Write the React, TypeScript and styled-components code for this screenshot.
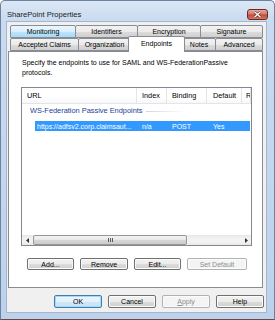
import styled, { createGlobalStyle } from "styled-components";

const GlobalStyle = createGlobalStyle`
  html, body {
    margin: 0;
    padding: 0;
    background: #ffffff;
  }
  body {
    font-family: "Liberation Sans", Arial, sans-serif;
    font-size: 7px;
    color: #000;
  }
`;

const Window = styled.div`
  box-sizing: border-box;
  width: 275px;
  height: 320px;
  display: flex;
  flex-direction: column;
  border: 1px solid #6d829e;
  border-bottom-color: #6b4a45;
  border-radius: 5px 5px 0 0;
  background: linear-gradient(to bottom, #dbe7f5 0px, #c9dbf0 20px, #bcd2ec 100%);
  overflow: hidden;
`;

const TitleBar = styled.div`
  height: 20px;
  flex-shrink: 0;
  display: flex;
  align-items: center;
  justify-content: space-between;
  box-sizing: border-box;
  padding: 6px 6px 0 6px;
`;

const Title = styled.span`
  font-size: 7.6px;
  color: #1a1a1a;
`;

const CloseButton = styled.div`
  width: 21px;
  height: 11px;
  box-sizing: border-box;
  border: 1px solid #6a2b24;
  border-radius: 3px;
  background: linear-gradient(to bottom, #e9a99b 0%, #d47968 45%, #c04a39 55%, #d5765d 100%);
  display: flex;
  align-items: center;
  justify-content: center;
`;

const Client = styled.div`
  flex: 1;
  display: flex;
  flex-direction: column;
  margin: 0 7px 6px 5px;
  border: 1px solid #a3b6cd;
  background: #f0f0f0;
  padding: 3px 0 4px 0;
  min-height: 0;
`;

const TabStrip = styled.div`
  display: flex;
  flex-direction: column;
  padding-left: 3px;
`;

const TabRow = styled.div`
  display: flex;
  height: 13px;
`;

const Tab = styled.div<{ $w: number; $hot?: boolean; $active?: boolean }>`
  box-sizing: border-box;
  width: ${({ $w }) => $w}px;
  height: ${({ $active }) => ($active ? 16 : 13)}px;
  margin-left: ${({ $active }) => ($active ? -3 : -1)}px;
  margin-right: ${({ $active }) => ($active ? -2 : 0)}px;
  margin-top: ${({ $active }) => ($active ? -2 : 0)}px;
  position: relative;
  z-index: ${({ $active }) => ($active ? 2 : 1)};
  border: 1px solid #898c95;
  border-bottom: ${({ $active }) => ($active ? "none" : "1px solid #898c95")};
  border-radius: 2px 2px 0 0;
  background: ${({ $hot, $active }) =>
    $active
      ? "#ffffff"
      : $hot
        ? "linear-gradient(to bottom, #eaf6fd 0%, #d9f0fc 50%, #bee6fd 51%, #a7d9f5 100%)"
        : "linear-gradient(to bottom, #f2f2f2 0%, #ebebeb 50%, #dddddd 51%, #cfcfcf 100%)"};
  display: flex;
  align-items: center;
  justify-content: center;
  padding-bottom: ${({ $active }) => ($active ? 2 : 0)}px;
  white-space: nowrap;
  &:first-child {
    margin-left: ${({ $active }) => ($active ? -2 : 0)}px;
  }
`;

const Panel = styled.div`
  flex: 1;
  display: flex;
  flex-direction: column;
  margin: 0 3px 0 1px;
  border: 1px solid #898c95;
  background: #ffffff;
  padding: 6px 10px 0 12px;
  min-height: 0;
`;

const Intro = styled.p`
  margin: 0 0 0 1px;
  line-height: 10px;
  width: 215px;
`;

const ListView = styled.div`
  margin-top: 9px;
  height: 159px;
  box-sizing: border-box;
  border: 1px solid #828790;
  display: flex;
  flex-direction: column;
  overflow: hidden;
`;

const HeaderRow = styled.div`
  display: flex;
  height: 16px;
  flex-shrink: 0;
  box-sizing: border-box;
  border-bottom: 1px solid #e5e5e5;
  background: linear-gradient(to bottom, #ffffff 0%, #ffffff 60%, #f7f8fa 100%);
`;

const HeaderCell = styled.div<{ $w?: number; $pad?: number }>`
  box-sizing: border-box;
  width: ${({ $w }) => ($w ? `${$w}px` : "auto")};
  flex: ${({ $w }) => ($w ? "none" : "1")};
  padding-left: ${({ $pad }) => $pad ?? 5}px;
  border-right: 1px solid #e5e5e5;
  display: flex;
  align-items: center;
  font-size: 7.3px;
  overflow: hidden;
  white-space: nowrap;
`;

const GroupHeader = styled.div`
  display: flex;
  align-items: center;
  height: 11px;
  margin-top: 1px;
  padding-left: 8px;
  color: #1e3c96;
  font-size: 7.4px;
  white-space: nowrap;
`;

const GroupLine = styled.div`
  width: 40px;
  height: 1px;
  margin-left: 3px;
  margin-top: 1px;
  background: linear-gradient(to right, #cfd7e6 0%, #e6ebf3 50%, rgba(255, 255, 255, 0) 100%);
`;

const ItemRow = styled.div<{ $selected?: boolean }>`
  display: flex;
  height: 10px;
  margin: 5px 1px 0 13px;
  background: ${({ $selected }) => ($selected ? "#3399ff" : "transparent")};
  color: ${({ $selected }) => ($selected ? "#ffffff" : "#000000")};
`;

const ItemCell = styled.div<{ $w?: number; $pad?: number }>`
  box-sizing: border-box;
  width: ${({ $w }) => ($w ? `${$w}px` : "auto")};
  flex: ${({ $w }) => ($w ? "none" : "1")};
  padding-left: ${({ $pad }) => $pad ?? 5}px;
  display: flex;
  align-items: center;
  overflow: hidden;
  white-space: nowrap;
`;

const Spacer = styled.div`
  flex: 1;
`;

const HScroll = styled.div`
  height: 10px;
  flex-shrink: 0;
  display: flex;
  align-items: stretch;
  background: linear-gradient(to bottom, #e6e6e6 0%, #f2f2f2 30%, #f2f2f2 70%, #e8e8e8 100%);
`;

const ScrollArrow = styled.div`
  width: 10px;
  display: flex;
  align-items: center;
  justify-content: center;
`;

const Thumb = styled.div<{ $w: number }>`
  width: ${({ $w }) => $w}px;
  box-sizing: border-box;
  margin-left: 1px;
  border: 1px solid #979797;
  border-radius: 2px;
  background: linear-gradient(to bottom, #f3f3f3 0%, #e8e8e8 50%, #d6d6d6 51%, #cdcdcd 100%);
  display: flex;
  align-items: center;
  justify-content: center;
  gap: 1px;
`;

const Grip = styled.div`
  width: 1px;
  height: 4px;
  background: #5a5a5a;
`;

const ButtonRow = styled.div<{ $gap: number }>`
  display: flex;
  gap: ${({ $gap }) => $gap}px;
`;

const PanelButtons = styled(ButtonRow)`
  margin: 12px 0 0 6px;
`;

const Footer = styled(ButtonRow)`
  justify-content: flex-end;
  margin-top: 7px;
  padding-right: 2px;
`;

const Button = styled.div<{ $w: number; $h?: number; $disabled?: boolean; $default?: boolean }>`
  box-sizing: border-box;
  width: ${({ $w }) => $w}px;
  height: ${({ $h }) => $h ?? 12}px;
  border: 1px solid
    ${({ $disabled, $default }) => ($disabled ? "#adb2b5" : $default ? "#3c7fb1" : "#707070")};
  border-radius: 2px;
  background: ${({ $disabled, $default }) =>
    $disabled
      ? "#f4f4f4"
      : $default
        ? "linear-gradient(to bottom, #eaf6fd 0%, #e3f1fb 50%, #d0e8f8 51%, #c8e2f5 100%)"
        : "linear-gradient(to bottom, #f2f2f2 0%, #ebebeb 50%, #dddddd 51%, #cfcfcf 100%)"};
  box-shadow: ${({ $default }) => ($default ? "inset 0 0 0 1px #a9d8f5" : "inset 0 0 0 1px #fcfcfc")};
  color: ${({ $disabled }) => ($disabled ? "#8d8d8d" : "#000000")};
  display: flex;
  align-items: center;
  justify-content: center;
  white-space: nowrap;
`;

const Mnemonic = styled.span`
  text-decoration: underline;
`;

function Arrow({ dir }: { dir: "left" | "right" }) {
  return (
    <svg width="3" height="5" viewBox="0 0 3 5">
      {dir === "left" ? <path d="M3 0 L0 2.5 L3 5 Z" fill="#333" /> : <path d="M0 0 L3 2.5 L0 5 Z" fill="#333" />}
    </svg>
  );
}

const topTabs = [
  { label: "Monitoring", w: 66, hot: true },
  { label: "Identifiers", w: 63 },
  { label: "Encryption", w: 64 },
  { label: "Signature", w: 63 },
];

const bottomTabs = [
  { label: "Accepted Claims", w: 69 },
  { label: "Organization", w: 53 },
  { label: "Endpoints", w: 57, active: true },
  { label: "Notes", w: 34 },
  { label: "Advanced", w: 48 },
];

export default function App() {
  return (
    <>
      <GlobalStyle />
      <Window>
        <TitleBar>
          <Title>SharePoint Properties</Title>
          <CloseButton>
            <svg width="9" height="7" viewBox="0 0 9 7">
              <path d="M1.5 0.8 L7.5 6.2 M7.5 0.8 L1.5 6.2" stroke="#5a211b" strokeWidth="2.4" />
              <path d="M1.5 0.8 L7.5 6.2 M7.5 0.8 L1.5 6.2" stroke="#ffffff" strokeWidth="1.4" />
            </svg>
          </CloseButton>
        </TitleBar>
        <Client>
          <TabStrip>
            <TabRow>
              {topTabs.map((t) => (
                <Tab key={t.label} $w={t.w} $hot={t.hot}>
                  {t.label}
                </Tab>
              ))}
            </TabRow>
            <TabRow>
              {bottomTabs.map((t) => (
                <Tab key={t.label} $w={t.w} $active={t.active}>
                  {t.label}
                </Tab>
              ))}
            </TabRow>
          </TabStrip>
          <Panel>
            <Intro>Specify the endpoints to use for SAML and WS-FederationPassive protocols.</Intro>
            <ListView>
              <HeaderRow>
                <HeaderCell $w={115}>URL</HeaderCell>
                <HeaderCell $w={30}>Index</HeaderCell>
                <HeaderCell $w={40}>Binding</HeaderCell>
                <HeaderCell $w={35} $pad={6}>Default</HeaderCell>
                <HeaderCell $pad={4}>R</HeaderCell>
              </HeaderRow>
              <GroupHeader>
                WS-Federation Passive Endpoints
                <GroupLine />
              </GroupHeader>
              <ItemRow $selected>
                <ItemCell $w={102} $pad={2}>
                  https://adfsv2.corp.claimsaut...
                </ItemCell>
                <ItemCell $w={30}>n/a</ItemCell>
                <ItemCell $w={40}>POST</ItemCell>
                <ItemCell $w={35} $pad={6}>
                  Yes
                </ItemCell>
                <ItemCell />
              </ItemRow>
              <Spacer />
              <HScroll>
                <ScrollArrow>
                  <Arrow dir="left" />
                </ScrollArrow>
                <Thumb $w={154}>
                  <Grip />
                  <Grip />
                  <Grip />
                </Thumb>
                <Spacer />
                <ScrollArrow>
                  <Arrow dir="right" />
                </ScrollArrow>
              </HScroll>
            </ListView>
            <PanelButtons $gap={6}>
              <Button $w={47}>Add...</Button>
              <Button $w={48}>Remove</Button>
              <Button $w={47}>Edit...</Button>
              <Button $w={60} $disabled>
                Set Default
              </Button>
            </PanelButtons>
          </Panel>
          <Footer $gap={6}>
            <Button $w={48} $h={13} $default>
              OK
            </Button>
            <Button $w={48} $h={13}>
              Cancel
            </Button>
            <Button $w={48} $h={13} $disabled>
              <Mnemonic>A</Mnemonic>pply
            </Button>
            <Button $w={48} $h={13}>
              Help
            </Button>
          </Footer>
        </Client>
      </Window>
    </>
  );
}
